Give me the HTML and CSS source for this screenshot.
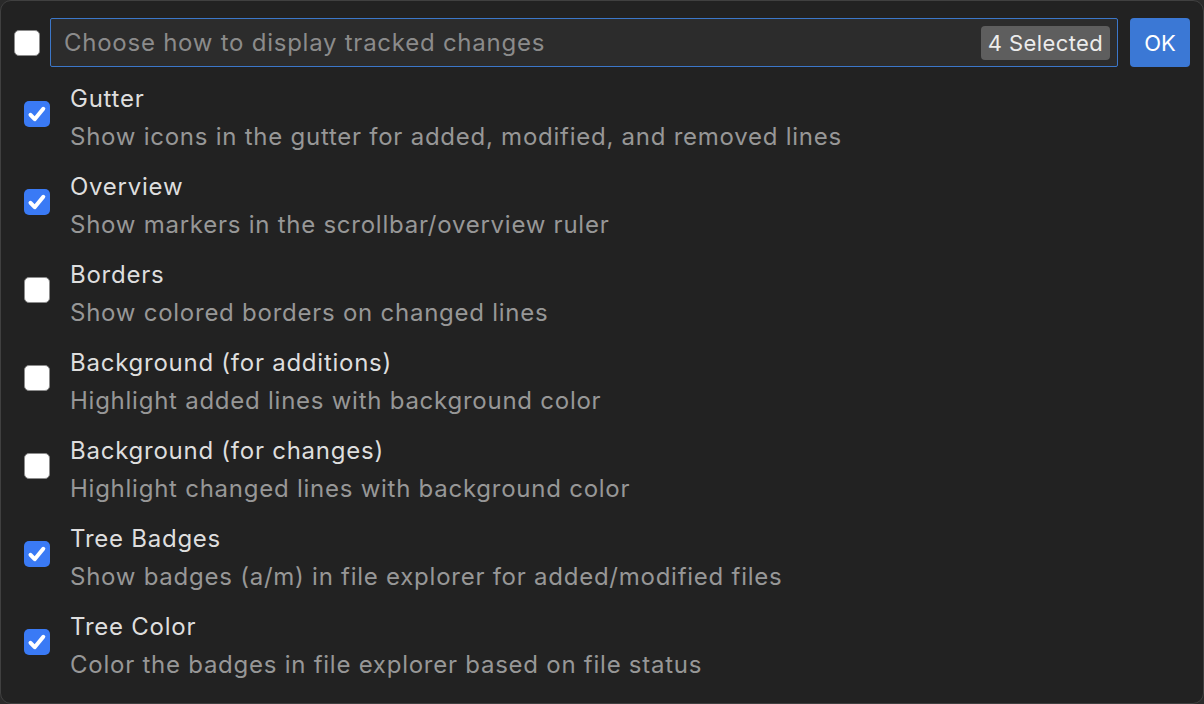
FILE: index.html
```html
<!DOCTYPE html>
<html>
<head>
<meta charset="utf-8">
<link rel="stylesheet" href="styles.css">
</head>
<body>
<div class="panel">
  <div class="header">
    <span class="cb cb-top"></span>
    <div class="input">
      <span class="placeholder">Choose how to display tracked changes</span>
      <span class="badge">4 Selected</span>
    </div>
    <button class="ok">OK</button>
  </div>
  <ul class="list">
    <li class="item">
      <span class="cb checked"><svg viewBox="0 0 26 26"><path d="M6.5 13.8l4.2 4.4 8.6-10.4" /></svg></span>
      <div class="text"><div class="title">Gutter</div><div class="desc">Show icons in the gutter for added, modified, and removed lines</div></div>
    </li>
    <li class="item">
      <span class="cb checked"><svg viewBox="0 0 26 26"><path d="M6.5 13.8l4.2 4.4 8.6-10.4" /></svg></span>
      <div class="text"><div class="title">Overview</div><div class="desc">Show markers in the scrollbar/overview ruler</div></div>
    </li>
    <li class="item">
      <span class="cb"></span>
      <div class="text"><div class="title">Borders</div><div class="desc">Show colored borders on changed lines</div></div>
    </li>
    <li class="item">
      <span class="cb"></span>
      <div class="text"><div class="title">Background (for additions)</div><div class="desc">Highlight added lines with background color</div></div>
    </li>
    <li class="item">
      <span class="cb"></span>
      <div class="text"><div class="title">Background (for changes)</div><div class="desc">Highlight changed lines with background color</div></div>
    </li>
    <li class="item">
      <span class="cb checked"><svg viewBox="0 0 26 26"><path d="M6.5 13.8l4.2 4.4 8.6-10.4" /></svg></span>
      <div class="text"><div class="title">Tree Badges</div><div class="desc">Show badges (a/m) in file explorer for added/modified files</div></div>
    </li>
    <li class="item">
      <span class="cb checked"><svg viewBox="0 0 26 26"><path d="M6.5 13.8l4.2 4.4 8.6-10.4" /></svg></span>
      <div class="text"><div class="title">Tree Color</div><div class="desc">Color the badges in file explorer based on file status</div></div>
    </li>
  </ul>
</div>
</body>
</html>
```
FILE: styles.css
```css
html, body {
  margin: 0;
  padding: 0;
  background: #2a2a2a;
}
body {
  width: 1204px;
  height: 704px;
  font-family: Inter, "Noto Sans", sans-serif;
}
.panel {
  box-sizing: border-box;
  width: 1204px;
  height: 704px;
  background: #222222;
  border: 1px solid #404040;
  border-radius: 11px;
  padding: 17px 13px 0 13px;
}
.header {
  display: flex;
  align-items: center;
  height: 49px;
}
.cb {
  box-sizing: border-box;
  flex: none;
  width: 26px;
  height: 26px;
  border-radius: 5px;
  background: #ffffff;
  border: 1.5px solid #8c8c8c;
  display: flex;
  align-items: center;
  justify-content: center;
}
.cb-top {
  margin-right: 10px;
}
.cb.checked {
  background: #3a7af5;
  border: none;
}
.cb svg {
  width: 26px;
  height: 26px;
}
.cb svg path {
  fill: none;
  stroke: #ffffff;
  stroke-width: 4;
  stroke-linecap: round;
  stroke-linejoin: round;
}
.input {
  box-sizing: border-box;
  flex: none;
  width: 1068px;
  height: 49px;
  border: 1px solid #3c77c9;
  border-radius: 2px;
  background: #2c2c2c;
  display: flex;
  align-items: center;
  justify-content: space-between;
  padding: 0 7px 0 13px;
}
.placeholder {
  font-size: 24px;
  letter-spacing: 0.75px;
  color: #8b8b8b;
}
.badge {
  box-sizing: border-box;
  height: 34px;
  width: 129px;
  background: #5e5e5e;
  border-radius: 4px;
  color: #ececec;
  font-size: 22px;
  letter-spacing: 0.4px;
  display: flex;
  align-items: center;
  justify-content: center;
}
.ok {
  box-sizing: border-box;
  margin-left: 12px;
  width: 60px;
  height: 49px;
  border: none;
  border-radius: 4px;
  background: #3b78d5;
  color: #ffffff;
  font-family: inherit;
  font-size: 22px;
  padding: 0;
}
.list {
  list-style: none;
  margin: 13px 0 0 0;
  padding: 0 0 0 10px;
  display: flex;
  flex-direction: column;
  gap: 12px;
}
.item {
  display: flex;
  align-items: flex-start;
  height: 76px;
}
.item .cb {
  margin-top: 21px;
  margin-right: 20px;
}
.text {
  display: flex;
  flex-direction: column;
}
.title {
  font-size: 24px;
  letter-spacing: 0.75px;
  line-height: 38px;
  color: #dedede;
}
.desc {
  font-size: 24px;
  letter-spacing: 0.75px;
  line-height: 38px;
  color: #979797;
}
```
